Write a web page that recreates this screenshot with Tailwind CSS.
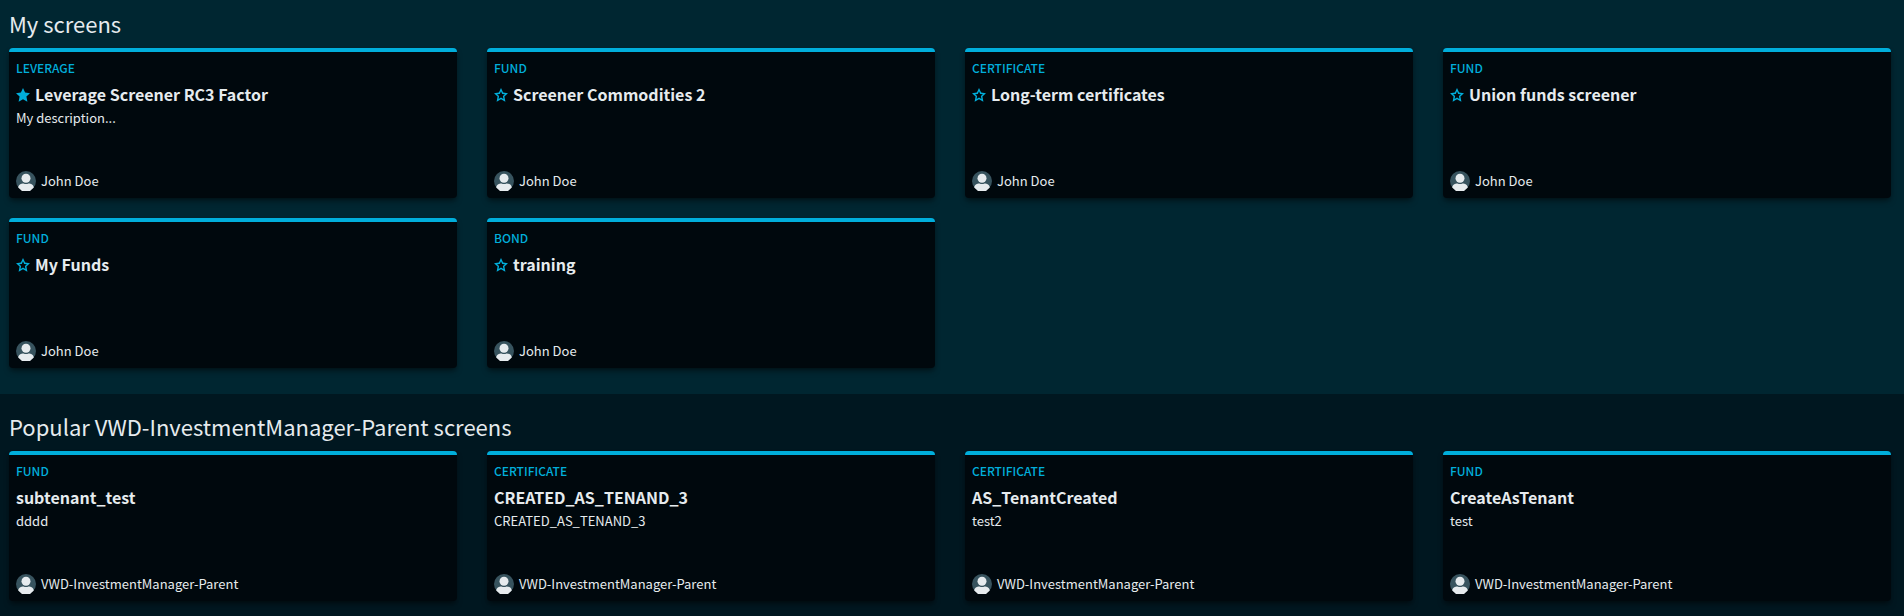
<!DOCTYPE html>
<html lang="en">
<head>
<meta charset="utf-8">
<meta name="viewport" content="width=device-width, initial-scale=1">
<title>Screens</title>
<script src="https://cdn.jsdelivr.net/npm/@tailwindcss/browser@4"></script>
</head>
<body class="flex min-h-screen flex-col bg-[#001720] font-['Noto_Sans_CJK_SC','Noto_Sans',sans-serif] text-sm leading-5 text-[#e6ebee]">
<svg class="hidden" aria-hidden="true">
  <symbol id="star-full" viewBox="0 0 14 14"><path fill="currentColor" d="M7 0 9.1 4.6 14 5.2 10.4 8.6 11.4 13.8 7 11.2 2.6 13.8 3.6 8.6 0 5.2 4.9 4.6Z"/></symbol>
  <symbol id="star-empty" viewBox="0 0 14 14"><path fill="currentColor" fill-rule="evenodd" d="M7 0 9.1 4.6 14 5.2 10.4 8.6 11.4 13.8 7 11.2 2.6 13.8 3.6 8.6 0 5.2 4.9 4.6ZM7 3.3 5.8 5.9 3.1 6.2 5.1 8.1 4.6 11 7 9.6 9.4 11 8.9 8.1 10.9 6.2 8.2 5.9Z"/></symbol>
  <symbol id="avatar" viewBox="0 0 20 20"><clipPath id="disc"><circle cx="10" cy="10" r="10"/></clipPath><circle cx="10" cy="10" r="10" fill="#37535e"/><g fill="#e6ebee" clip-path="url(#disc)"><circle cx="10" cy="7.2" r="4.5"/><path d="M2.2 16.5C2.4 13.6 5 12.4 7.5 12.4 9 13.1 11 13.1 12.5 12.4 15 12.4 17.6 13.6 17.8 16.5L14 20H6Z"/></g></symbol>
</svg>

<section class="bg-[#002631] pt-2 pr-[13px] pb-[26px] pl-[9px]">
  <h2 class="mb-2.5 text-[22px] leading-[30px]">My screens</h2>
  <div class="grid grid-cols-4 gap-x-[30px] gap-y-5">
    <article class="flex min-h-[150px] flex-col rounded border-t-4 border-[#00aedb] bg-[#00080d] px-[7px] pt-1.5 pb-[7px] shadow-md shadow-black/40">
      <p class="text-xs leading-5 font-medium text-[#00aedb]">LEVERAGE</p>
      <div class="mt-[5px] flex items-center gap-[5px]"><button type="button" aria-label="Remove from favorites" class="text-[#00aedb]"><svg class="size-3.5"><use href="#star-full"/></svg></button><h3 class="pb-0.5 text-base leading-[22px] font-bold">Leverage Screener RC3 Factor</h3></div>
      <p class="mt-px text-[13px] leading-5">My description...</p>
      <div class="mt-auto flex items-center gap-[5px] text-[13px]"><svg class="size-5" aria-hidden="true"><use href="#avatar"/></svg><span>John Doe</span></div>
    </article>
    <article class="flex min-h-[150px] flex-col rounded border-t-4 border-[#00aedb] bg-[#00080d] px-[7px] pt-1.5 pb-[7px] shadow-md shadow-black/40">
      <p class="text-xs leading-5 font-medium text-[#00aedb]">FUND</p>
      <div class="mt-[5px] flex items-center gap-[5px]"><button type="button" aria-label="Add to favorites" class="text-[#00aedb]"><svg class="size-3.5"><use href="#star-empty"/></svg></button><h3 class="pb-0.5 text-base leading-[22px] font-bold">Screener Commodities 2</h3></div>
      <div class="mt-auto flex items-center gap-[5px] text-[13px]"><svg class="size-5" aria-hidden="true"><use href="#avatar"/></svg><span>John Doe</span></div>
    </article>
    <article class="flex min-h-[150px] flex-col rounded border-t-4 border-[#00aedb] bg-[#00080d] px-[7px] pt-1.5 pb-[7px] shadow-md shadow-black/40">
      <p class="text-xs leading-5 font-medium text-[#00aedb]">CERTIFICATE</p>
      <div class="mt-[5px] flex items-center gap-[5px]"><button type="button" aria-label="Add to favorites" class="text-[#00aedb]"><svg class="size-3.5"><use href="#star-empty"/></svg></button><h3 class="pb-0.5 text-base leading-[22px] font-bold">Long-term certificates</h3></div>
      <div class="mt-auto flex items-center gap-[5px] text-[13px]"><svg class="size-5" aria-hidden="true"><use href="#avatar"/></svg><span>John Doe</span></div>
    </article>
    <article class="flex min-h-[150px] flex-col rounded border-t-4 border-[#00aedb] bg-[#00080d] px-[7px] pt-1.5 pb-[7px] shadow-md shadow-black/40">
      <p class="text-xs leading-5 font-medium text-[#00aedb]">FUND</p>
      <div class="mt-[5px] flex items-center gap-[5px]"><button type="button" aria-label="Add to favorites" class="text-[#00aedb]"><svg class="size-3.5"><use href="#star-empty"/></svg></button><h3 class="pb-0.5 text-base leading-[22px] font-bold">Union funds screener</h3></div>
      <div class="mt-auto flex items-center gap-[5px] text-[13px]"><svg class="size-5" aria-hidden="true"><use href="#avatar"/></svg><span>John Doe</span></div>
    </article>
    <article class="flex min-h-[150px] flex-col rounded border-t-4 border-[#00aedb] bg-[#00080d] px-[7px] pt-1.5 pb-[7px] shadow-md shadow-black/40">
      <p class="text-xs leading-5 font-medium text-[#00aedb]">FUND</p>
      <div class="mt-[5px] flex items-center gap-[5px]"><button type="button" aria-label="Add to favorites" class="text-[#00aedb]"><svg class="size-3.5"><use href="#star-empty"/></svg></button><h3 class="pb-0.5 text-base leading-[22px] font-bold">My Funds</h3></div>
      <div class="mt-auto flex items-center gap-[5px] text-[13px]"><svg class="size-5" aria-hidden="true"><use href="#avatar"/></svg><span>John Doe</span></div>
    </article>
    <article class="flex min-h-[150px] flex-col rounded border-t-4 border-[#00aedb] bg-[#00080d] px-[7px] pt-1.5 pb-[7px] shadow-md shadow-black/40">
      <p class="text-xs leading-5 font-medium text-[#00aedb]">BOND</p>
      <div class="mt-[5px] flex items-center gap-[5px]"><button type="button" aria-label="Add to favorites" class="text-[#00aedb]"><svg class="size-3.5"><use href="#star-empty"/></svg></button><h3 class="pb-0.5 text-base leading-[22px] font-bold">training</h3></div>
      <div class="mt-auto flex items-center gap-[5px] text-[13px]"><svg class="size-5" aria-hidden="true"><use href="#avatar"/></svg><span>John Doe</span></div>
    </article>
  </div>
</section>

<section class="pt-[17px] pr-[13px] pb-3.5 pl-[9px]">
  <h2 class="mb-2.5 text-[22px] leading-[30px]">Popular VWD-InvestmentManager-Parent screens</h2>
  <div class="grid grid-cols-4 gap-x-[30px] gap-y-5">
    <article class="flex min-h-[150px] flex-col rounded border-t-4 border-[#00aedb] bg-[#00080d] px-[7px] pt-1.5 pb-[7px] shadow-md shadow-black/40">
      <p class="text-xs leading-5 font-medium text-[#00aedb]">FUND</p>
      <h3 class="mt-[5px] pb-0.5 text-base leading-[22px] font-bold">subtenant_test</h3>
      <p class="mt-px text-[13px] leading-5">dddd</p>
      <div class="mt-auto flex items-center gap-[5px] text-[13px]"><svg class="size-5" aria-hidden="true"><use href="#avatar"/></svg><span>VWD-InvestmentManager-Parent</span></div>
    </article>
    <article class="flex min-h-[150px] flex-col rounded border-t-4 border-[#00aedb] bg-[#00080d] px-[7px] pt-1.5 pb-[7px] shadow-md shadow-black/40">
      <p class="text-xs leading-5 font-medium text-[#00aedb]">CERTIFICATE</p>
      <h3 class="mt-[5px] pb-0.5 text-base leading-[22px] font-bold">CREATED_AS_TENAND_3</h3>
      <p class="mt-px text-[13px] leading-5">CREATED_AS_TENAND_3</p>
      <div class="mt-auto flex items-center gap-[5px] text-[13px]"><svg class="size-5" aria-hidden="true"><use href="#avatar"/></svg><span>VWD-InvestmentManager-Parent</span></div>
    </article>
    <article class="flex min-h-[150px] flex-col rounded border-t-4 border-[#00aedb] bg-[#00080d] px-[7px] pt-1.5 pb-[7px] shadow-md shadow-black/40">
      <p class="text-xs leading-5 font-medium text-[#00aedb]">CERTIFICATE</p>
      <h3 class="mt-[5px] pb-0.5 text-base leading-[22px] font-bold">AS_TenantCreated</h3>
      <p class="mt-px text-[13px] leading-5">test2</p>
      <div class="mt-auto flex items-center gap-[5px] text-[13px]"><svg class="size-5" aria-hidden="true"><use href="#avatar"/></svg><span>VWD-InvestmentManager-Parent</span></div>
    </article>
    <article class="flex min-h-[150px] flex-col rounded border-t-4 border-[#00aedb] bg-[#00080d] px-[7px] pt-1.5 pb-[7px] shadow-md shadow-black/40">
      <p class="text-xs leading-5 font-medium text-[#00aedb]">FUND</p>
      <h3 class="mt-[5px] pb-0.5 text-base leading-[22px] font-bold">CreateAsTenant</h3>
      <p class="mt-px text-[13px] leading-5">test</p>
      <div class="mt-auto flex items-center gap-[5px] text-[13px]"><svg class="size-5" aria-hidden="true"><use href="#avatar"/></svg><span>VWD-InvestmentManager-Parent</span></div>
    </article>
  </div>
</section>
</body>
</html>
